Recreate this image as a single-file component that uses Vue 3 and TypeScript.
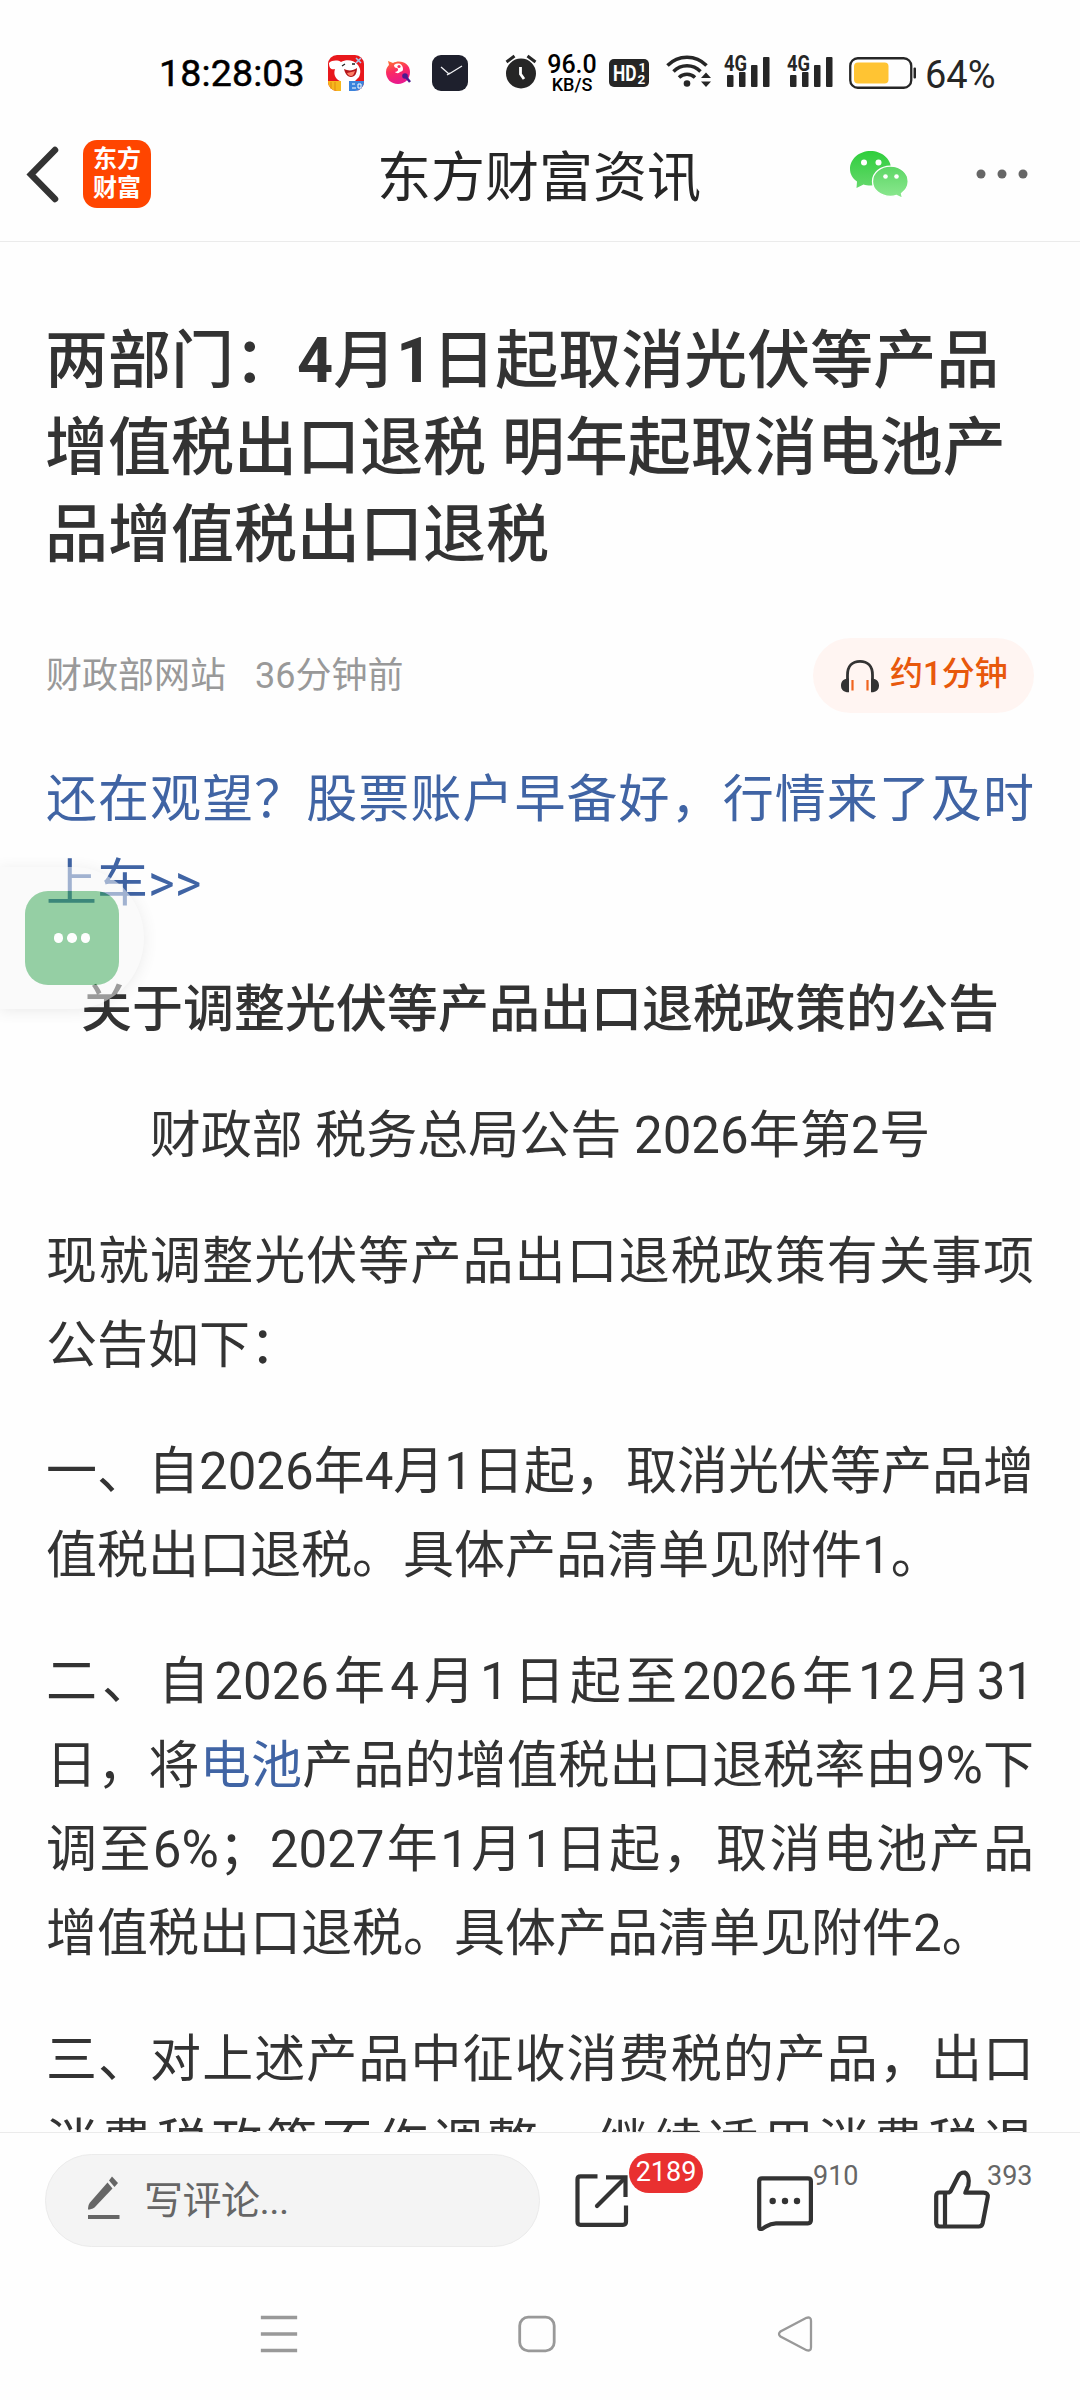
<script setup lang="ts">
interface Paragraph {
  align: 'body' | 'center'
  strong?: boolean
  parts: { text: string; link?: boolean }[]
}

// Numerals in the headline are set bolder than the surrounding characters.
const headline = '两部门：4月1日起取消光伏等产品增值税出口退税 明年起取消电池产品增值税出口退税'
  .split(/(\d+)/)
  .map((text) => ({ text, digit: /^\d+$/.test(text) }))

const paragraphs: Paragraph[] = [
  { align: 'body', parts: [{ text: '还在观望？股票账户早备好，行情来了及时上车>>', link: true }] },
  { align: 'center', strong: true, parts: [{ text: '关于调整光伏等产品出口退税政策的公告' }] },
  { align: 'center', parts: [{ text: '财政部 税务总局公告 2026年第2号' }] },
  { align: 'body', parts: [{ text: '现就调整光伏等产品出口退税政策有关事项公告如下：' }] },
  { align: 'body', parts: [{ text: '一、自2026年4月1日起，取消光伏等产品增值税出口退税。具体产品清单见附件1。' }] },
  {
    align: 'body',
    parts: [
      { text: '二、自2026年4月1日起至2026年12月31日，将' },
      { text: '电池', link: true },
      { text: '产品的增值税出口退税率由9%下调至6%；2027年1月1日起，取消电池产品增值税出口退税。具体产品清单见附件2。' },
    ],
  },
  { align: 'body', parts: [{ text: '三、对上述产品中征收消费税的产品，出口消费税政策不作调整，继续适用消费税退（免）税政策。' }] },
]

const signalBars = [
  { x: 3, h: 12 },
  { x: 15, h: 15 },
  { x: 27, h: 22 },
  { x: 39, h: 30 },
]
</script>

<template>
  <div class="screen">
    <div class="status">
      <span class="time">18:28:03</span>
      <svg class="app-jd" width="36" height="36" viewBox="0 0 36 36">
        <defs><clipPath id="jd"><rect width="36" height="36" rx="9" /></clipPath></defs>
        <g clip-path="url(#jd)">
          <rect width="36" height="36" fill="#e8181c" />
          <path d="M1 8C4 5 10 5 13 7c5-3 13-2 16 2 4 4 4 9 2 13l-4 4 3 10H12V26C8 24 5 20 7 14 4 15 1 14 1 8z" fill="#fff" />
          <path d="M16 14c4 2 9 2 13-1 0 5-2 9-6 9-4 0-6-4-7-8z" fill="#b5161a" />
          <path d="M19 18c3-1 6-1 8-2-1 3-2 5-4 5-2 0-3-1-4-3z" fill="#ff8066" />
          <path d="M14 11l3-2M24 9l3 0" stroke="#222" stroke-width="1.3" />
          <rect y="26" width="13" height="10" fill="#f6b81c" />
          <path d="M3 27v9M7 27v9" stroke="#e08b10" />
          <rect x="21" y="26" width="15" height="10" fill="#3b83dc" />
          <path d="M24 29h3M24 33h4M30 29h3v4h-3z" stroke="#fff" fill="none" />
          <path d="M28 3l5 5M33 3l-5 5" stroke="#a9c8ee" stroke-width="1.5" />
        </g>
      </svg>
      <svg class="app-bird" width="25" height="25" viewBox="0 0 25 25">
        <defs>
          <linearGradient id="bird" x1="0" y1="0" x2="0.3" y2="1">
            <stop offset="0" stop-color="#ff7a2e" /><stop offset=".5" stop-color="#fb2a62" /><stop offset="1" stop-color="#e91a8c" />
          </linearGradient>
        </defs>
        <path d="M2 1l5 2C14-1 24 3 24 12c0 7-5 12-12 12S0 19 0 12C0 8 2 6 3 5z" fill="url(#bird)" />
        <path d="M8 5c4-3 9-1 9 4 0 2-1 2-3 3-2 2-4 1-5 0 3 0 4-3 2-4-2 0-3-1-3-3z" fill="#fff" />
        <circle cx="13" cy="6.500" r="1.600" fill="#f1305c" />
        <circle cx="19" cy="16" r="2.800" fill="#4c1a8f" />
        <path d="M20 17l4 5" stroke="#4c1a8f" stroke-width="2.500" />
      </svg>
      <svg class="app-clock" width="36" height="36" viewBox="0 0 36 36">
        <rect width="36" height="36" rx="9" fill="#1e202d" />
        <path d="M9 12l8 7 13-8M15 20l3-2" stroke="#f2f2f5" stroke-width="1.300" fill="none" />
      </svg>
      <svg class="alarm" width="32" height="35" viewBox="0 0 32 35">
        <circle cx="16" cy="19.500" r="15" fill="#262626" />
        <path d="M1.500 8L9.500 2M30.500 8L22.500 2" stroke="#262626" stroke-width="3" />
        <path d="M15.500 13v7l3.500 5" stroke="#fff" stroke-width="2.800" fill="none" />
      </svg>
      <div class="speed"><b>96.0</b><i>KB/S</i></div>
      <svg class="hd" width="40" height="28" viewBox="0 0 40 28">
        <rect width="40" height="28" rx="5" fill="#262626" />
        <text x="4" y="21.700" class="hd-text" textLength="23.500" lengthAdjust="spacingAndGlyphs">HD</text>
        <text x="29.500" y="13" class="hd-num">1</text>
        <text x="28.500" y="24.800" class="hd-num">2</text>
      </svg>
      <svg class="wifi" width="46" height="36" viewBox="0 0 46 36">
        <g fill="none" stroke="#262626" stroke-width="3.500">
          <path d="M1.500 12.500a27 27 0 0 1 39 0" />
          <path d="M7.500 18.500a19 19 0 0 1 27 0" />
          <path d="M13 24.500a11.500 11.500 0 0 1 16 0" />
        </g>
        <circle cx="21" cy="30.500" r="3.300" fill="#262626" />
        <path d="M35 25h10l-5-5.500zM35 28.500h10l-5 5.500z" fill="#262626" />
      </svg>
      <svg v-for="n in 2" :key="n" :class="['signal', 'signal-' + n]" width="46" height="34" viewBox="0 0 46 34">
        <rect v-for="b in signalBars" :key="b.x" :x="b.x" :y="33 - b.h" width="6.500" :height="b.h" rx="1" fill="#262626" />
        <text x="0" y="17" class="net" textLength="23" lengthAdjust="spacingAndGlyphs">4G</text>
      </svg>
      <svg class="battery" width="68" height="32" viewBox="0 0 68 32">
        <rect x="1.250" y="1.250" width="61" height="29.500" rx="7.500" fill="none" stroke="#262626" stroke-width="2.300" />
        <rect x="5" y="5.500" width="34.500" height="21" rx="4" fill="#ffc433" />
        <rect x="64.500" y="10.500" width="2.500" height="11" rx="1" fill="#262626" />
      </svg>
      <span class="percent">64%</span>
    </div>

    <header class="bar">
      <svg class="back" width="34" height="58" viewBox="0 0 34 58">
        <path d="M30 5L6 29.500 30 54" fill="none" stroke="#333" stroke-width="6.500" stroke-linecap="round" />
      </svg>
      <div class="logo"><span>东方</span><span>财富</span></div>
      <h2>东方财富资讯</h2>
      <svg class="wechat" width="60" height="48" viewBox="0 0 60 48">
        <defs>
          <linearGradient id="wa" x1="0" y1="0" x2="0" y2="1"><stop offset="0" stop-color="#2fce3c" /><stop offset="1" stop-color="#65d86c" /></linearGradient>
          <linearGradient id="wb" x1="0" y1="0" x2="0" y2="1"><stop offset="0" stop-color="#5cd665" /><stop offset="1" stop-color="#8ce890" /></linearGradient>
        </defs>
        <path d="M20.500 0C9 0 0 8 0 18c0 5 2.500 9.500 7 12.500L6.500 37l7-3.500c2 .6 4.500 1 7 1C32 34.500 41 27 41 17.500S32 0 20.500 0z" fill="url(#wa)" />
        <path d="M40.500 15.200c-10 0-18 6.700-18 15.200s8 15 18 15c2 0 4-.3 6-1l6 3-1-5c4-3 6.700-7 6.700-12 0-8.500-7.700-15.200-17.700-15.200z" fill="url(#wb)" stroke="#fff" stroke-width="1.300" />
        <circle cx="14" cy="11.500" r="3" fill="#fff" /><circle cx="28.500" cy="11.500" r="3" fill="#fff" />
        <circle cx="35.500" cy="25.500" r="2.300" fill="#fff" /><circle cx="46.500" cy="25.500" r="2.300" fill="#fff" />
      </svg>
      <svg class="more" width="54" height="10" viewBox="0 0 54 10" fill="#666">
        <circle cx="6" cy="5" r="4.500" /><circle cx="27" cy="5" r="4.500" /><circle cx="48" cy="5" r="4.500" />
      </svg>
    </header>

    <main class="article">
      <h1><span v-for="(t, i) in headline" :key="i" :class="{ digit: t.digit }">{{ t.text }}</span></h1>
      <div class="meta">
        <span>财政部网站</span>
        <span class="when">36分钟前</span>
        <div class="listen">
          <svg width="40" height="34" viewBox="0 0 40 34">
            <path d="M7.500 22v-6C7.500 7 12.500 2.300 20 2.300S32.500 7 32.500 16v6" fill="none" stroke="#333" stroke-width="2.800" />
            <path d="M9 19.500v13.800C4 33.500 1 31 1 26.500s3-7 8-7zM31 19.500v13.800c5 .2 8-2.300 8-6.800s-3-7-8-7z" fill="#333" />
            <path d="M12.500 21v10.500M27.500 21v10.500" stroke="#f0641e" stroke-width="2.200" />
          </svg>
          <span>约1分钟</span>
        </div>
      </div>
      <p v-for="(p, i) in paragraphs" :key="i" :class="[p.align, { strong: p.strong }]"><span v-for="(t, j) in p.parts" :key="j" :class="{ link: t.link }">{{ t.text }}</span></p>
    </main>

    <footer class="actions">
      <div class="comment">
        <svg width="32" height="44" viewBox="0 0 32 44" fill="#666">
          <path d="M19.500 7.500l5 6L6.500 32.500C4.500 34 2 34.500 0 34.500c0-2.500.5-5 2-7z" />
          <path d="M24 1.500l6 6.500-3.500 4-5.500-6.500z" />
          <rect x="0" y="40" width="31.500" height="4" />
        </svg>
        <span>写评论...</span>
      </div>
      <div class="action share">
        <svg width="54" height="56" viewBox="0 0 54 56" fill="none" stroke="#333" stroke-width="4.200">
          <path d="M22.500 4.300H5.500q-3 0-3 3v42.500q0 3 3 3H48q3 0 3-3V33.500" />
          <path d="M31 5.300h19.500V25" /><path d="M49 7L22 34" stroke-linecap="round" />
        </svg>
        <em class="badge">2189</em>
      </div>
      <div class="action chat">
        <svg width="56" height="56" viewBox="0 0 56 56">
          <path d="M5 3.300h46q2.900 0 2.900 3v39q0 3-3 3H19c-7 0-9 3-13 5q-3.800 1.700-3.800-1V6.300q0-3 2.800-3z" fill="none" stroke="#333" stroke-width="4.200" stroke-linejoin="round" />
          <circle cx="15.700" cy="26" r="3.200" fill="#333" /><circle cx="28" cy="26" r="3.200" fill="#333" /><circle cx="40" cy="26" r="3.200" fill="#333" />
        </svg>
        <em class="count">910</em>
      </div>
      <div class="action like">
        <svg width="56" height="58" viewBox="0 0 56 58" fill="none" stroke="#333" stroke-width="4.200" stroke-linejoin="round">
          <path d="M5.500 22.500H14q2 0 3-2l7.300-14.500C26 2.500 29 2.500 30.500 2.500c4 2 5 7.500 3.800 13l-3 7.200H49.500q5 0 4.200 4.500l-5 26q-.8 3.300-4 3.300H5.500q-3.300 0-3.300-3.500V26q0-3.500 3.300-3.500z" />
          <path d="M11 23v33" />
        </svg>
        <em class="count">393</em>
      </div>
    </footer>

    <nav class="system">
      <svg width="36" height="38" viewBox="0 0 36 38" stroke="#999" stroke-width="3.300" stroke-linecap="square">
        <path d="M1.500 2.500h33M1.500 19h33M1.500 35.500h33" />
      </svg>
      <svg width="38" height="38" viewBox="0 0 38 38"><rect x="1.700" y="2.200" width="34.500" height="33.600" rx="8.500" fill="none" stroke="#999" stroke-width="2.800" /></svg>
      <svg width="36" height="38" viewBox="0 0 36 38">
        <path d="M29.500 2.800L3.500 16.500q-3 2.500 0 5L29.500 35.200q4.500 1.300 4.500-3V5.800q0-4.300-4.500-3z" fill="none" stroke="#999" stroke-width="2.300" />
      </svg>
    </nav>

    <div class="floating">
      <div class="bubble"><i /><i /><i /></div>
    </div>
  </div>
</template>

<style>
body {
  background: #fff;
}
</style>

<style scoped>
.screen {
  position: relative;
  width: 1080px;
  height: 2400px;
  overflow: hidden;
  display: flex;
  flex-direction: column;
  background: #fefefe;
  color: #333;
  font-family: Roboto, 'Noto Sans CJK SC', sans-serif;
  text-spacing-trim: space-all;
}
.screen svg {
  display: block;
  flex: none;
  overflow: visible;
}
.status {
  height: 110px;
  display: flex;
  align-items: flex-start;
  flex: none;
}
.time {
  margin: 51px 0 0 159px;
  width: 169px;
  font-size: 37.500px;
  line-height: 45px;
  color: #000;
  letter-spacing: 0.15px;
  -webkit-text-stroke: 0.5px #000;
}
.app-jd { margin-top: 55px; }
.app-bird { margin: 60px 0 0 22px; }
.app-clock { margin: 55px 0 0 21px; }
.alarm { margin: 54px 0 0 37px; }
.speed {
  margin: 53px 0 0 9px;
  width: 52px;
  display: flex;
  flex-direction: column;
  align-items: center;
  color: #000;
}
.speed b {
  font-size: 25px;
  line-height: 23px;
  font-weight: 500;
}
.speed i {
  font-size: 18px;
  line-height: 18px;
  font-style: normal;
  font-weight: 500;
}
.hd { margin: 59px 0 0 11px; }
.hd-text { font-size: 22px; font-weight: 700; fill: #fff; }
.hd-num { font-size: 13.500px; font-weight: 700; fill: #fff; }
.wifi { margin: 53px 0 0 17px; }
.signal { margin-top: 54px; }
.signal-1 { margin-left: 12px; }
.signal-2 { margin-left: 17px; }
.net { font-size: 22px; font-weight: 700; fill: #262626; stroke: #fefefe; stroke-width: 2px; paint-order: stroke; }
.battery { margin: 57px 0 0 16px; }
.percent {
  margin: 53px 0 0 8px;
  font-size: 38px;
  line-height: 45px;
  color: #262626;
}
.bar {
  height: 131px;
  flex: none;
  display: flex;
  align-items: flex-start;
  border-bottom: 1px solid #ebebeb;
}
.back { margin: 35px 0 0 25px; }
.logo {
  margin: 30px 0 0 24px;
  width: 68px;
  height: 68px;
  border-radius: 14px;
  background: #ff4500;
  display: flex;
  flex-direction: column;
  align-items: center;
  justify-content: center;
  color: #fff;
  font-size: 24px;
  line-height: 29px;
  font-weight: 700;
}
.bar h2 {
  margin: 29px 0 0 226px;
  width: 473px;
  font-size: 54px;
  line-height: 80px;
  font-weight: 400;
  color: #262626;
}
.wechat { margin-top: 41px; }
.more { margin: 59px 0 0 65px; }
.article {
  height: 1890px;
  flex: none;
  overflow: hidden;
  padding: 0 46px;
}
h1 {
  margin: 75px 0 0 -1px;
  font-size: 63px;
  line-height: 87px;
  font-weight: 500;
  word-break: break-all;
}
.digit { font-weight: 700; }
.meta {
  margin: 60px 0 45px;
  height: 75px;
  display: flex;
  color: #999;
  font-size: 36px;
  line-height: 76px;
}
.when { margin-left: 29px; }
.listen {
  margin-left: auto;
  width: 221px;
  height: 75px;
  border-radius: 38px;
  background: #fff5f2;
  display: flex;
  padding-left: 27px;
  box-sizing: border-box;
  gap: 10px;
  font-size: 33px;
  line-height: 72px;
  font-weight: 500;
  color: #e8590c;
}
.listen svg { margin-top: 21px; }
p {
  margin: 0 0 42px;
  font-size: 51px;
  line-height: 84px;
  text-align: justify;
}
p.center { text-align: center; }
p.strong { font-weight: 500; }
.link { color: #4064a4; }
.actions {
  height: 135px;
  flex: none;
  display: flex;
  align-items: flex-start;
  border-top: 1px solid #ebebeb;
}
.comment {
  margin: 21px 0 0 45px;
  width: 495px;
  height: 93px;
  box-sizing: border-box;
  border: 1px solid #ebebeb;
  border-radius: 47px;
  background: #f4f4f4;
  display: flex;
  padding-left: 42px;
  gap: 24px;
  color: #666;
  font-size: 39px;
  line-height: 92px;
  letter-spacing: -0.5px;
}
.comment svg { margin-top: 20px; }
.action { position: relative; }
.share { margin: 39px 0 0 35px; }
.chat { margin: 42px 0 0 128px; }
.like { margin: 37px 0 0 121px; }
.badge,
.count {
  position: absolute;
  left: 56px;
  font-style: normal;
  font-size: 27px;
  line-height: 38px;
}
.badge {
  left: 54px;
  top: -19px;
  width: 74px;
  height: 40px;
  border-radius: 20px;
  background: #e93030;
  color: #fff;
  text-align: center;
}
.count { color: #666; top: -18px; }
.like .count { left: 53px; top: -13px; }
.system {
  flex: 1;
  display: flex;
  align-items: flex-start;
  padding: 47px 267px 0 261px;
  justify-content: space-between;
}
.floating {
  position: absolute;
  left: 0;
  top: 867px;
  width: 144px;
  height: 142px;
  border-radius: 0 72px 72px 0;
  background: #f8f8f8;
  box-shadow: 0 2px 14px rgba(0, 0, 0, 0.14);
  opacity: 0.53;
  display: flex;
  align-items: center;
  padding-left: 25px;
  box-sizing: border-box;
}
.bubble {
  width: 94px;
  height: 94px;
  border-radius: 23px;
  background: #39a655;
  display: flex;
  align-items: center;
  justify-content: center;
  gap: 4px;
}
.bubble i {
  width: 9.500px;
  height: 9.500px;
  border-radius: 50%;
  background: #fff;
}
</style>
